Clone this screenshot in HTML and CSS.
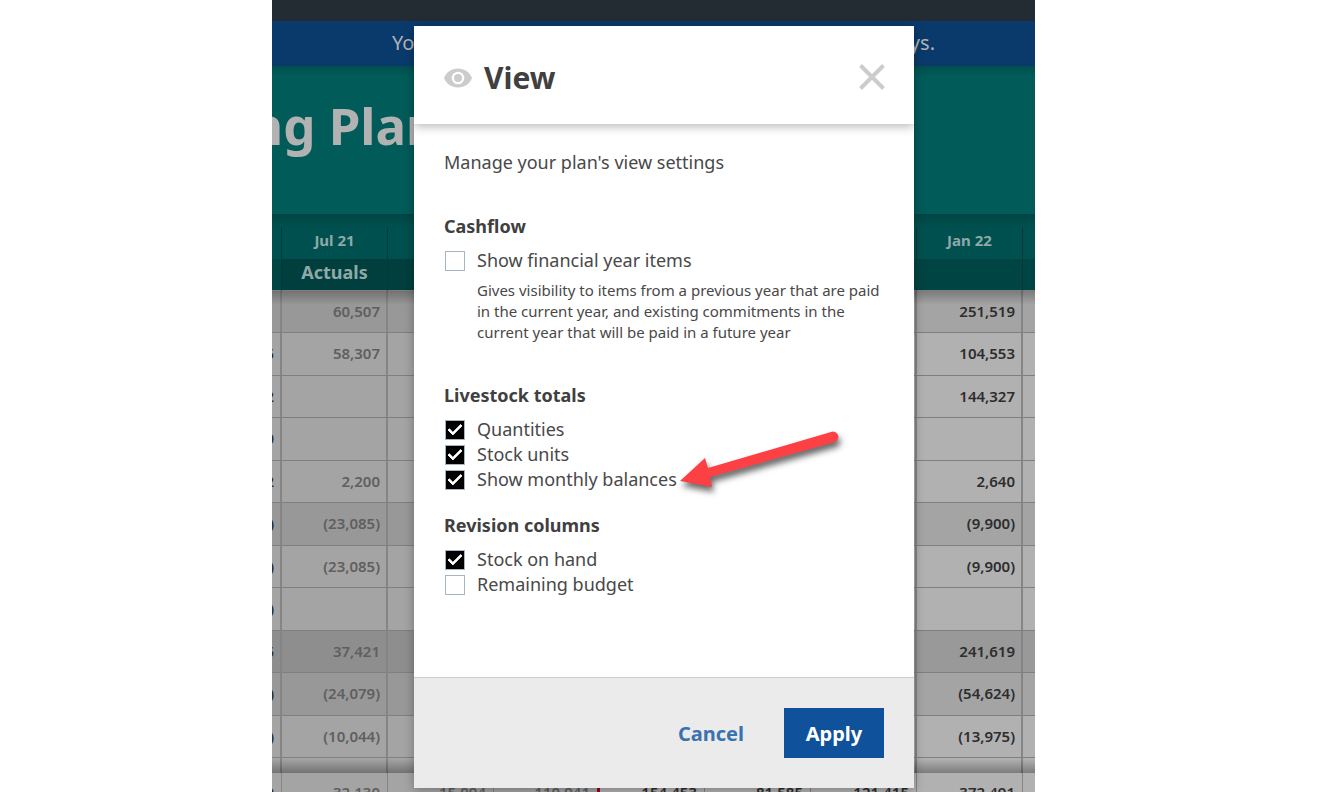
FILE: index.html
```html
<!DOCTYPE html>
<html lang="en">
<head>
    <meta charset="UTF-8">
    <meta name="viewport" content="width=device-width, initial-scale=1.0">
    <title>View</title>
    <link rel="stylesheet" href="styles.css">
</head>
<body>

    <div class="app">
        <div class="topbar"></div>
        <div class="banner"><span>Yo</span><span>ys.</span></div>
        <div class="hero">
            <h1>ng Plan</h1>
        </div>

        <div class="sheet">
            <table>
                <thead>
                    <tr class="months">
                        <th></th><th>Jul 21</th><th></th><th></th><th></th><th></th><th></th><th>Jan 22</th><th></th>
                    </tr>
                    <tr class="types">
                        <th></th><th class="actual">Actuals</th><th class="actual"></th><th class="actual"></th><th></th><th></th><th></th><th></th><th></th>
                    </tr>
                </thead>
                <tbody>
                    <tr class="shaded"><td>1</td><td>60,507</td><td></td><td></td><td></td><td></td><td></td><td>251,519</td><td></td></tr>
                    <tr><td>5</td><td>58,307</td><td></td><td></td><td></td><td></td><td></td><td>104,553</td><td></td></tr>
                    <tr><td>2</td><td></td><td></td><td></td><td></td><td></td><td></td><td>144,327</td><td></td></tr>
                    <tr><td>0</td><td></td><td></td><td></td><td></td><td></td><td></td><td></td><td></td></tr>
                    <tr><td>2</td><td>2,200</td><td></td><td></td><td></td><td></td><td></td><td>2,640</td><td></td></tr>
                    <tr class="shaded"><td>)</td><td>(23,085)</td><td></td><td></td><td></td><td></td><td></td><td>(9,900)</td><td></td></tr>
                    <tr><td>)</td><td>(23,085)</td><td></td><td></td><td></td><td></td><td></td><td>(9,900)</td><td></td></tr>
                    <tr><td>)</td><td></td><td></td><td></td><td></td><td></td><td></td><td></td><td></td></tr>
                    <tr class="total"><td>5</td><td>37,421</td><td></td><td></td><td></td><td></td><td></td><td>241,619</td><td></td></tr>
                    <tr class="shaded"><td>)</td><td>(24,079)</td><td></td><td></td><td></td><td></td><td></td><td>(54,624)</td><td></td></tr>
                    <tr><td>)</td><td>(10,044)</td><td></td><td></td><td></td><td></td><td></td><td>(13,975)</td><td></td></tr>
                    <tr><td></td><td>(5,044)</td><td></td><td></td><td></td><td></td><td></td><td>(8,975)</td><td></td></tr>
                </tbody>
            </table>
        </div>

        <!-- Closing balances stay pinned under the sheet -->
        <div class="closing">
            <table>
                <tbody>
                    <tr><td>0</td><td>32,130</td><td>15,094</td><td class="today">110,941</td><td>154,453</td><td>81,585</td><td>121,415</td><td>372,491</td><td></td></tr>
                </tbody>
            </table>
        </div>

        <div class="overlay">
            <form class="modal">
                <div class="modal-header">
                    <svg class="eye" viewBox="0 0 28 20" width="28" height="20">
                        <path fill="#cccccc" fill-rule="evenodd" d="M0 10C2.500 4 7.500 .5 14 .5S25.500 4 28 10C25.500 16 20.500 19.500 14 19.500S2.500 16 0 10ZM14 3.700A6.300 6.300 0 1 0 14 16.300A6.300 6.300 0 1 0 14 3.700Z"/>
                        <circle fill="#cccccc" cx="14" cy="10" r="4"/>
                    </svg>
                    <h2>View</h2>
                    <button type="button" class="close" aria-label="Close">
                        <svg viewBox="0 0 26 26" width="26" height="26">
                            <path stroke="#cccccc" stroke-width="4" d="M1.500 1.500L24.500 24.500M24.500 1.500L1.500 24.500"/>
                        </svg>
                    </button>
                </div>

                <div class="modal-body">
                    <p class="intro">Manage your plan's view settings</p>

                    <h3>Cashflow</h3>
                    <label class="option"><input type="checkbox"> Show financial year items</label>
                    <p class="hint">Gives visibility to items from a previous year that are paid in the current year, and existing commitments in the current year that will be paid in a future year</p>

                    <h3>Livestock totals</h3>
                    <label class="option"><input type="checkbox" checked> Quantities</label>
                    <label class="option"><input type="checkbox" checked> Stock units</label>
                    <label class="option"><input type="checkbox" checked> Show monthly balances</label>

                    <h3 class="near">Revision columns</h3>
                    <label class="option"><input type="checkbox" checked> Stock on hand</label>
                    <label class="option"><input type="checkbox"> Remaining budget</label>
                </div>

                <div class="modal-footer">
                    <button type="button" class="cancel">Cancel</button>
                    <button type="button" class="apply">Apply</button>
                </div>

                <svg class="arrow" viewBox="0 0 170 80" width="170" height="80">
                    <path fill="#fc4044" d="M6 56L31 33L34 43L157 7A5 5 0 0 1 161 17L36 52L38 62Z"/>
                </svg>
            </form>
        </div>
    </div>

</body>
</html>
```
FILE: styles.css
```css
body {
    margin: 0;
    font-family: "Noto Sans", sans-serif;
    color: #484848;
    background-color: #fff;
    overflow: hidden;
}

h1, h2, h3, p {
    margin: 0;
}

h2, h3 {
    color: #404040;
}

button {
    border: none;
    padding: 0;
    background: none;
    font-family: inherit;
    cursor: pointer;
}

.app {
    position: relative;
    display: flex;
    flex-direction: column;
    height: 100vh;
    margin: 0 286px 0 272px;
    overflow: hidden;
}

.topbar {
    flex: none;
    height: 21px;
    background-color: #242c33;
}

.banner {
    flex: none;
    display: flex;
    justify-content: space-between;
    height: 45px;
    padding: 0 100px 0 120px;
    line-height: 44px;
    font-size: 20px;
    color: #b2b2b2;
    background-color: #0a3a6c;
}

.hero {
    flex: none;
    height: 148px;
    background: linear-gradient(#004e4d, #005b59 10px);
}

.hero h1 {
    margin-left: -22px;
    padding-top: 24px;
    font-size: 51px;
    line-height: 70px;
    color: #b2b2b2;
    white-space: nowrap;
}

/* Sheet, scrolled part way across */
.sheet {
    position: relative;
    flex: 1;
    min-height: 0;
    overflow: hidden;
    padding-top: 13px;
    background: linear-gradient(#004544, #00504f 13px);
}

.sheet::before,
.sheet::after {
    content: "";
    position: absolute;
    left: 0;
    right: 0;
    height: 14px;
}

.sheet::before {
    top: 77px;
    background: linear-gradient(rgba(0, 0, 0, 0.25), rgba(0, 0, 0, 0));
}

.sheet::after {
    bottom: 0;
    background: linear-gradient(rgba(0, 0, 0, 0), rgba(0, 0, 0, 0.3));
}

table {
    width: 953px;
    margin-left: -96px;
    border-collapse: separate;
    border-spacing: 0;
    table-layout: fixed;
}

th, td {
    box-sizing: border-box;
    width: 106px;
    padding: 0;
    white-space: nowrap;
}

th:nth-child(5),
td:nth-child(5) {
    width: 105px;
}

th {
    border-right: 1px solid #003b3a;
    text-align: center;
    color: #8fa9a8;
}

.months th {
    height: 32px;
    padding-bottom: 6px;
    font-size: 15px;
    line-height: 20px;
    background-color: #00504f;
}

.types th {
    height: 32px;
    padding-bottom: 5px;
    border-bottom: 1px solid #7f7f7f;
    font-size: 18px;
    line-height: 20px;
    background-color: #004443;
}

.types .actual {
    background-color: #003f3e;
}

td {
    height: 43px;
    padding: 0 6px 2px 0;
    border-right: 2px solid #858585;
    border-bottom: 1px solid #7f7f7f;
    font-size: 15px;
    font-weight: 600;
    line-height: 20px;
    text-align: right;
    color: #2d2d2d;
    background-color: #b1b1b1;
}

.sheet tr:nth-child(odd) td {
    height: 42px;
}

td:nth-child(-n+4) {
    background-color: #a4a4a4;
}

td:nth-child(n+2):nth-child(-n+4) {
    color: #5f5f5f;
}

.shaded td {
    background-color: #a4a4a4;
}

.shaded td:nth-child(-n+4) {
    background-color: #989898;
}

.total td {
    background-color: #999999;
}

.total td:nth-child(-n+4) {
    background-color: #8e8e8e;
}

.closing {
    flex: none;
    height: 19px;
    overflow: hidden;
}

.closing td {
    height: 40px;
    padding-right: 7px;
    border-right-width: 1px;
}

.closing td.today {
    border-right: 3px solid #a0001c;
}

/* View settings dialog */
.overlay {
    position: absolute;
    inset: 0;
    display: flex;
    justify-content: center;
    padding: 26px 0 4px 21px;
}

.modal {
    position: relative;
    display: flex;
    flex-direction: column;
    width: 500px;
    background-color: #fff;
    box-shadow: 0 2px 10px rgba(0, 0, 0, 0.3);
}

.modal-header {
    display: flex;
    align-items: center;
    height: 98px;
    padding: 0 29px 0 30px;
    box-shadow: 0 2px 10px rgba(0, 0, 0, 0.3);
    clip-path: inset(0 0 -20px 0);
}

.eye {
    margin-top: 6px;
}

.modal-header h2 {
    margin-left: 12px;
    padding-top: 6px;
    font-size: 30px;
    line-height: 40px;
}

.close {
    height: 26px;
    margin: 4px 0 0 auto;
}

.close svg {
    display: block;
}

.modal-body {
    flex: 1;
    padding: 24px 30px;
}

.intro {
    font-size: 18px;
    line-height: 28px;
}

.modal-body h3 {
    margin: 38px 0 9px;
    font-size: 18px;
    line-height: 25px;
}

.modal-body h3.near {
    margin-top: 21px;
}

.option {
    display: flex;
    align-items: center;
    gap: 12px;
    height: 25px;
    font-size: 18px;
    line-height: 25px;
}

.option input {
    appearance: none;
    box-sizing: border-box;
    display: flex;
    justify-content: center;
    width: 20px;
    height: 20px;
    margin: 0 0 0 1px;
    border: 1px solid #a9b4c2;
    background-color: #fff;
}

.option input:checked {
    background-color: #000;
}

.option input:checked::after {
    content: "";
    width: 14px;
    height: 8px;
    margin-top: 3px;
    box-sizing: border-box;
    border: solid #fff;
    border-width: 0 0 3px 3px;
    border-radius: 1px;
    transform: rotate(-45deg);
}

.hint {
    margin: 7px 0 0 33px;
    padding-bottom: 2px;
    font-size: 15px;
    line-height: 21px;
}

.modal-footer {
    display: flex;
    justify-content: flex-end;
    align-items: center;
    height: 110px;
    padding: 0 30px;
    border-top: 1px solid #cccccc;
    background-color: #ebebeb;
}

.cancel,
.apply {
    height: 50px;
    font-size: 20px;
    font-weight: 700;
}

.cancel {
    margin-right: 40px;
    color: #3a72b0;
}

.apply {
    width: 100px;
    color: #fff;
    background-color: #0f529b;
}

/* Pointer to the monthly balances option */
.arrow {
    position: absolute;
    left: 260px;
    top: 399px;
    filter: drop-shadow(2px 5px 3px rgba(0, 0, 0, 0.6));
}
```
